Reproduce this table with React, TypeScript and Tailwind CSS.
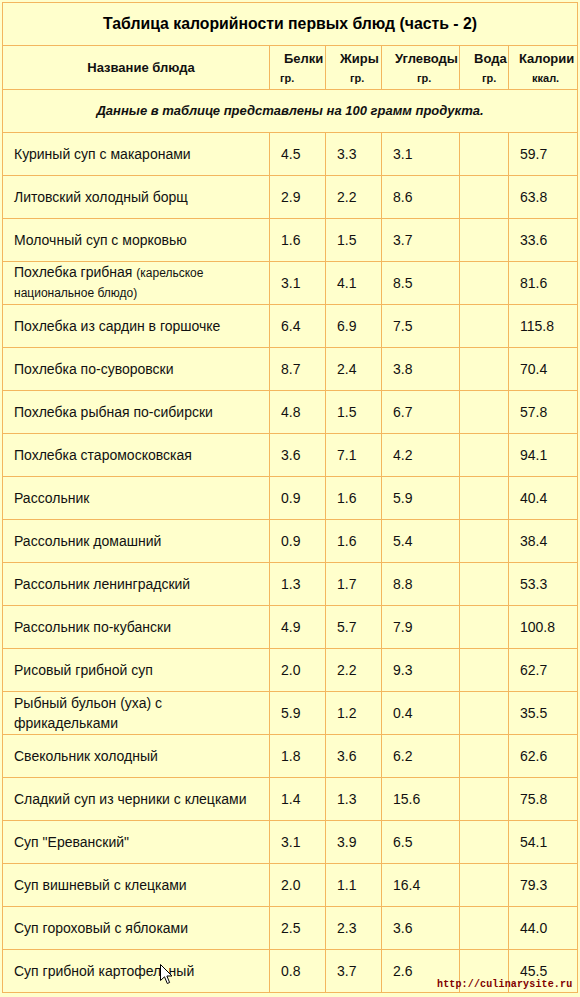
const rows: [string, string, string, string, string, string?][] = [
  ["Куриный суп с макаронами", "4.5", "3.3", "3.1", "59.7"],
  ["Литовский холодный борщ", "2.9", "2.2", "8.6", "63.8"],
  ["Молочный суп с морковью", "1.6", "1.5", "3.7", "33.6"],
  ["Похлебка грибная", "3.1", "4.1", "8.5", "81.6", "karel"],
  ["Похлебка из сардин в горшочке", "6.4", "6.9", "7.5", "115.8"],
  ["Похлебка по-суворовски", "8.7", "2.4", "3.8", "70.4"],
  ["Похлебка рыбная по-сибирски", "4.8", "1.5", "6.7", "57.8"],
  ["Похлебка старомосковская", "3.6", "7.1", "4.2", "94.1"],
  ["Рассольник", "0.9", "1.6", "5.9", "40.4"],
  ["Рассольник домашний", "0.9", "1.6", "5.4", "38.4"],
  ["Рассольник ленинградский", "1.3", "1.7", "8.8", "53.3"],
  ["Рассольник по-кубански", "4.9", "5.7", "7.9", "100.8"],
  ["Рисовый грибной суп", "2.0", "2.2", "9.3", "62.7"],
  ["Рыбный бульон (уха) с фрикадельками", "5.9", "1.2", "0.4", "35.5"],
  ["Свекольник холодный", "1.8", "3.6", "6.2", "62.6"],
  ["Сладкий суп из черники с клецками", "1.4", "1.3", "15.6", "75.8"],
  ['Суп "Ереванский"', "3.1", "3.9", "6.5", "54.1"],
  ["Суп вишневый с клецками", "2.0", "1.1", "16.4", "79.3"],
  ["Суп гороховый с яблоками", "2.5", "2.3", "3.6", "44.0"],
  ["Суп грибной картофельный", "0.8", "3.7", "2.6", "45.5"],
];

const cell = "border border-[#f3b65e] align-middle";
const numCell = `${cell} pl-[11px] text-[14px] text-[#111]`;

// header labels sit left with their own offsets, as on the page
const heads = [
  { label: "Белки", unit: "гр.", lp: "pl-[14px]", up: "pl-[10px]" },
  { label: "Жиры", unit: "гр.", lp: "pl-[14px]", up: "pl-[24px]" },
  { label: "Углеводы", unit: "гр.", lp: "pl-[13px]", up: "pl-[35px]" },
  { label: "Вода", unit: "гр.", lp: "pl-[14px]", up: "pl-[22px]" },
  { label: "Калории", unit: "ккал.", lp: "pl-[10px]", up: "pl-[23px]" },
];

function Cursor() {
  return (
    <svg
      className="absolute left-[160px] top-[964px]"
      width="13"
      height="21"
      viewBox="0 0 13 21"
    >
      <path
        d="M0.5 0.5 L0.5 16.5 L4.5 12.8 L7.3 19.5 L9.6 18.5 L6.9 12 L12 12 Z"
        fill="#fff"
        stroke="#000"
        strokeWidth="1"
        strokeLinejoin="round"
      />
    </svg>
  );
}

export default function App() {
  return (
    <div
      className="relative min-h-[997px] w-[580px] bg-[#ffffcc] pl-[2px] pt-[2px]"
      style={{ fontFamily: '"Liberation Sans", Arial, sans-serif' }}
    >
      <table className="w-[575px] table-fixed border-collapse text-left">
        <colgroup>
          <col className="w-[267px]" />
          <col className="w-[56px]" />
          <col className="w-[56px]" />
          <col className="w-[78px]" />
          <col className="w-[49px]" />
          <col className="w-[69px]" />
        </colgroup>
        <thead>
          <tr className="h-[43px]">
            <th
              colSpan={6}
              className={`${cell} text-center text-[15.8px] font-bold text-black`}
            >
              Таблица калорийности первых блюд (часть - 2)
            </th>
          </tr>
          <tr className="h-[44px]">
            <th
              className={`${cell} pl-[10px] text-center text-[13px] font-bold text-[#111]`}
            >
              Название блюда
            </th>
            {heads.map((h) => (
              <th
                key={h.label}
                className={`${cell} overflow-visible whitespace-nowrap text-left font-bold`}
              >
                <div className={`${h.lp} text-[13px] leading-[20px] text-[#111]`}>
                  {h.label}
                </div>
                <div className={`${h.up} text-[11px] leading-[18px] text-[#111]`}>
                  {h.unit}
                </div>
              </th>
            ))}
          </tr>
          <tr className="h-[43px]">
            <th
              colSpan={6}
              className={`${cell} text-center text-[13px] font-bold italic text-[#111]`}
            >
              Данные в таблице представлены на 100 грамм продукта.
            </th>
          </tr>
        </thead>
        <tbody>
          {rows.map(([name, p, f, c, kcal, kind]) => (
            <tr key={name} className="h-[43px]">
              <td
                className={`${cell} pl-[11px] pr-[8px] text-[14px] leading-[20px] text-[#111]`}
              >
                {kind === "karel" ? (
                  <>
                    <div>
                      {name} <span className="text-[12px]">(карельское</span>
                    </div>
                    <div className="text-[12px] leading-[21px]">
                      национальное блюдо)
                    </div>
                  </>
                ) : (
                  name
                )}
              </td>
              <td className={numCell}>{p}</td>
              <td className={numCell}>{f}</td>
              <td className={numCell}>{c}</td>
              <td className={numCell}></td>
              <td className={numCell}>{kcal}</td>
            </tr>
          ))}
        </tbody>
      </table>

      <span
        className="absolute left-[437px] top-[979px] text-[10px] font-bold leading-[12px] tracking-[0.15px] text-[#800000]"
        style={{ fontFamily: '"Liberation Mono", "Courier New", monospace' }}
      >
        http://culinarysite.ru
      </span>
      <Cursor />
    </div>
  );
}
